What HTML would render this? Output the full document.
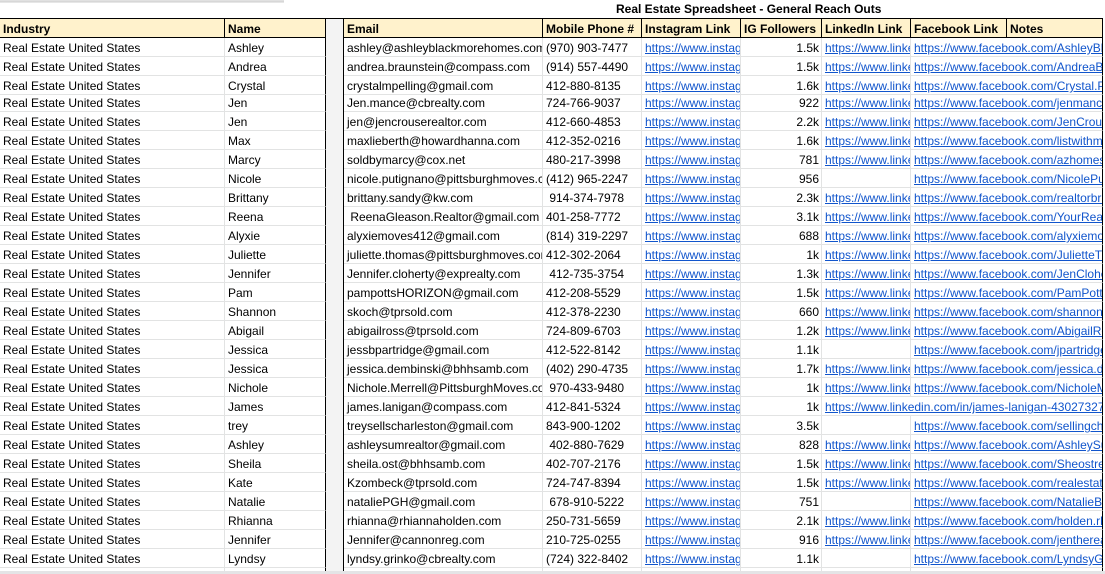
<!DOCTYPE html>
<html><head><meta charset="utf-8">
<style>
html,body{margin:0;padding:0;width:1105px;height:574px;overflow:hidden;background:#fff}
body{position:relative;font-family:"Liberation Sans",Arial,sans-serif;font-size:12px;color:#000}
#shadow{position:absolute;left:0;top:0;width:284px;height:3px;background:linear-gradient(#e6e6e6,#d4d4d4 60%,#f2f2f2)}
#title{position:absolute;left:616px;top:2px;height:15px;line-height:15px;font-weight:bold;white-space:nowrap}
#bar{position:absolute;left:0;top:571px;width:1105px;height:3px;background:#e4e4e6}
table{position:absolute;left:0;top:18px;border-collapse:separate;border-spacing:0;table-layout:fixed;width:1103px}
td,th{box-sizing:border-box;height:19px;padding:2px 0 0 3px;border-right:1px solid #e2e3e3;border-bottom:1px solid #e2e3e3;overflow:hidden;white-space:pre;text-align:left;line-height:16px;font-weight:normal;vertical-align:top}
th{height:20px;background:#fff2cc;font-weight:bold;border-top:1px solid #000;border-bottom:1px solid #000;border-right:1px solid #000}
th.g{background:#f3f3f3;border-bottom:0}
td.g{background:#f3f3f3;padding:0;border-bottom:0;border-right:1px solid #000}
td.n,th.n{border-right:1px solid #000}
td.r{text-align:right;padding:2px 2px 0 0}
td.e{border-right:1px solid #000}
tr.s td{height:17px;line-height:16px;padding-top:0}
tr.s td.r{padding-top:0}
tr.t td{height:3px;padding:0;line-height:0;border-bottom:0}
a{color:#1155cc;text-decoration:underline}
</style></head><body>
<div id="shadow"></div>
<div id="title">Real Estate Spreadsheet - General Reach Outs</div>
<table>
<colgroup><col style="width:225px"><col style="width:101px"><col style="width:18px"><col style="width:199px"><col style="width:99px"><col style="width:99px"><col style="width:81px"><col style="width:89px"><col style="width:96px"><col style="width:96px"></colgroup>
<tr><th>Industry</th><th>Name</th><th class="g"></th><th>Email</th><th>Mobile Phone #</th><th>Instagram Link</th><th>IG Followers</th><th>LinkedIn Link</th><th>Facebook Link</th><th>Notes</th></tr>
<tr><td>Real Estate United States</td><td class="n">Ashley</td><td class="g"></td><td>ashley@ashleyblackmorehomes.com</td><td>(970) 903-7477</td><td><a>https://www.instagram.com</a></td><td class="r">1.5k</td><td><a>https://www.linkedin.com</a></td><td colspan="2" class="e"><a>https://www.facebook.com/AshleyBlackmore</a></td></tr>
<tr><td>Real Estate United States</td><td class="n">Andrea</td><td class="g"></td><td>andrea.braunstein@compass.com</td><td>(914) 557-4490</td><td><a>https://www.instagram.com</a></td><td class="r">1.5k</td><td><a>https://www.linkedin.com</a></td><td colspan="2" class="e"><a>https://www.facebook.com/AndreaBraunstein</a></td></tr>
<tr><td>Real Estate United States</td><td class="n">Crystal</td><td class="g"></td><td>crystalmpelling@gmail.com</td><td>412-880-8135</td><td><a>https://www.instagram.com</a></td><td class="r">1.6k</td><td><a>https://www.linkedin.com</a></td><td colspan="2" class="e"><a>https://www.facebook.com/Crystal.Pelling</a></td></tr>
<tr class="s"><td>Real Estate United States</td><td class="n">Jen</td><td class="g"></td><td>Jen.mance@cbrealty.com</td><td>724-766-9037</td><td><a>https://www.instagram.com</a></td><td class="r">922</td><td><a>https://www.linkedin.com</a></td><td colspan="2" class="e"><a>https://www.facebook.com/jenmance</a></td></tr>
<tr><td>Real Estate United States</td><td class="n">Jen</td><td class="g"></td><td>jen@jencrouserealtor.com</td><td>412-660-4853</td><td><a>https://www.instagram.com</a></td><td class="r">2.2k</td><td><a>https://www.linkedin.com</a></td><td colspan="2" class="e"><a>https://www.facebook.com/JenCrouse</a></td></tr>
<tr><td>Real Estate United States</td><td class="n">Max</td><td class="g"></td><td>maxlieberth@howardhanna.com</td><td>412-352-0216</td><td><a>https://www.instagram.com</a></td><td class="r">1.6k</td><td><a>https://www.linkedin.com</a></td><td colspan="2" class="e"><a>https://www.facebook.com/listwithmax</a></td></tr>
<tr><td>Real Estate United States</td><td class="n">Marcy</td><td class="g"></td><td>soldbymarcy@cox.net</td><td>480-217-3998</td><td><a>https://www.instagram.com</a></td><td class="r">781</td><td><a>https://www.linkedin.com</a></td><td colspan="2" class="e"><a>https://www.facebook.com/azhomesbymarcy</a></td></tr>
<tr><td>Real Estate United States</td><td class="n">Nicole</td><td class="g"></td><td>nicole.putignano@pittsburghmoves.com</td><td>(412) 965-2247</td><td><a>https://www.instagram.com</a></td><td class="r">956</td><td></td><td colspan="2" class="e"><a>https://www.facebook.com/NicolePutignano</a></td></tr>
<tr><td>Real Estate United States</td><td class="n">Brittany</td><td class="g"></td><td>brittany.sandy@kw.com</td><td> 914-374-7978</td><td><a>https://www.instagram.com</a></td><td class="r">2.3k</td><td><a>https://www.linkedin.com</a></td><td colspan="2" class="e"><a>https://www.facebook.com/realtorbrittany</a></td></tr>
<tr><td>Real Estate United States</td><td class="n">Reena</td><td class="g"></td><td> ReenaGleason.Realtor@gmail.com</td><td>401-258-7772</td><td><a>https://www.instagram.com</a></td><td class="r">3.1k</td><td><a>https://www.linkedin.com</a></td><td colspan="2" class="e"><a>https://www.facebook.com/YourRealtorReena</a></td></tr>
<tr><td>Real Estate United States</td><td class="n">Alyxie</td><td class="g"></td><td>alyxiemoves412@gmail.com</td><td>(814) 319-2297</td><td><a>https://www.instagram.com</a></td><td class="r">688</td><td><a>https://www.linkedin.com</a></td><td colspan="2" class="e"><a>https://www.facebook.com/alyxiemoves</a></td></tr>
<tr><td>Real Estate United States</td><td class="n">Juliette</td><td class="g"></td><td>juliette.thomas@pittsburghmoves.com</td><td>412-302-2064</td><td><a>https://www.instagram.com</a></td><td class="r">1k</td><td><a>https://www.linkedin.com</a></td><td colspan="2" class="e"><a>https://www.facebook.com/JulietteThomas</a></td></tr>
<tr><td>Real Estate United States</td><td class="n">Jennifer</td><td class="g"></td><td>Jennifer.cloherty@exprealty.com</td><td> 412-735-3754</td><td><a>https://www.instagram.com</a></td><td class="r">1.3k</td><td><a>https://www.linkedin.com</a></td><td colspan="2" class="e"><a>https://www.facebook.com/JenCloherty</a></td></tr>
<tr><td>Real Estate United States</td><td class="n">Pam</td><td class="g"></td><td>pampottsHORIZON@gmail.com</td><td>412-208-5529</td><td><a>https://www.instagram.com</a></td><td class="r">1.5k</td><td><a>https://www.linkedin.com</a></td><td colspan="2" class="e"><a>https://www.facebook.com/PamPotts</a></td></tr>
<tr><td>Real Estate United States</td><td class="n">Shannon</td><td class="g"></td><td>skoch@tprsold.com</td><td>412-378-2230</td><td><a>https://www.instagram.com</a></td><td class="r">660</td><td><a>https://www.linkedin.com</a></td><td colspan="2" class="e"><a>https://www.facebook.com/shannonkoch</a></td></tr>
<tr><td>Real Estate United States</td><td class="n">Abigail</td><td class="g"></td><td>abigailross@tprsold.com</td><td>724-809-6703</td><td><a>https://www.instagram.com</a></td><td class="r">1.2k</td><td><a>https://www.linkedin.com</a></td><td colspan="2" class="e"><a>https://www.facebook.com/AbigailRoss</a></td></tr>
<tr><td>Real Estate United States</td><td class="n">Jessica</td><td class="g"></td><td>jessbpartridge@gmail.com</td><td>412-522-8142</td><td><a>https://www.instagram.com</a></td><td class="r">1.1k</td><td></td><td colspan="2" class="e"><a>https://www.facebook.com/jpartridge</a></td></tr>
<tr><td>Real Estate United States</td><td class="n">Jessica</td><td class="g"></td><td>jessica.dembinski@bhhsamb.com</td><td>(402) 290-4735</td><td><a>https://www.instagram.com</a></td><td class="r">1.7k</td><td><a>https://www.linkedin.com</a></td><td colspan="2" class="e"><a>https://www.facebook.com/jessica.dembinski</a></td></tr>
<tr><td>Real Estate United States</td><td class="n">Nichole</td><td class="g"></td><td>Nichole.Merrell@PittsburghMoves.com</td><td> 970-433-9480</td><td><a>https://www.instagram.com</a></td><td class="r">1k</td><td><a>https://www.linkedin.com</a></td><td colspan="2" class="e"><a>https://www.facebook.com/NicholeMerrell</a></td></tr>
<tr><td>Real Estate United States</td><td class="n">James</td><td class="g"></td><td>james.lanigan@compass.com</td><td>412-841-5324</td><td><a>https://www.instagram.com</a></td><td class="r">1k</td><td colspan="3" class="e"><a>https://www.linkedin.com/in/james-lanigan-43027327</a></td></tr>
<tr><td>Real Estate United States</td><td class="n">trey</td><td class="g"></td><td>treysellscharleston@gmail.com</td><td>843-900-1202</td><td><a>https://www.instagram.com</a></td><td class="r">3.5k</td><td></td><td colspan="2" class="e"><a>https://www.facebook.com/sellingcharleston</a></td></tr>
<tr><td>Real Estate United States</td><td class="n">Ashley</td><td class="g"></td><td>ashleysumrealtor@gmail.com</td><td> 402-880-7629</td><td><a>https://www.instagram.com</a></td><td class="r">828</td><td><a>https://www.linkedin.com</a></td><td colspan="2" class="e"><a>https://www.facebook.com/AshleySum</a></td></tr>
<tr><td>Real Estate United States</td><td class="n">Sheila</td><td class="g"></td><td>sheila.ost@bhhsamb.com</td><td>402-707-2176</td><td><a>https://www.instagram.com</a></td><td class="r">1.5k</td><td><a>https://www.linkedin.com</a></td><td colspan="2" class="e"><a>https://www.facebook.com/Sheostrealty</a></td></tr>
<tr><td>Real Estate United States</td><td class="n">Kate</td><td class="g"></td><td>Kzombeck@tprsold.com</td><td>724-747-8394</td><td><a>https://www.instagram.com</a></td><td class="r">1.5k</td><td><a>https://www.linkedin.com</a></td><td colspan="2" class="e"><a>https://www.facebook.com/realestatekate</a></td></tr>
<tr><td>Real Estate United States</td><td class="n">Natalie</td><td class="g"></td><td>nataliePGH@gmail.com</td><td> 678-910-5222</td><td><a>https://www.instagram.com</a></td><td class="r">751</td><td></td><td colspan="2" class="e"><a>https://www.facebook.com/NatalieBurns</a></td></tr>
<tr><td>Real Estate United States</td><td class="n">Rhianna</td><td class="g"></td><td>rhianna@rhiannaholden.com</td><td>250-731-5659</td><td><a>https://www.instagram.com</a></td><td class="r">2.1k</td><td><a>https://www.linkedin.com</a></td><td colspan="2" class="e"><a>https://www.facebook.com/holden.rhianna</a></td></tr>
<tr><td>Real Estate United States</td><td class="n">Jennifer</td><td class="g"></td><td>Jennifer@cannonreg.com</td><td>210-725-0255</td><td><a>https://www.instagram.com</a></td><td class="r">916</td><td><a>https://www.linkedin.com</a></td><td colspan="2" class="e"><a>https://www.facebook.com/jentherealtor</a></td></tr>
<tr><td>Real Estate United States</td><td class="n">Lyndsy</td><td class="g"></td><td>lyndsy.grinko@cbrealty.com</td><td>(724) 322-8402</td><td><a>https://www.instagram.com</a></td><td class="r">1.1k</td><td></td><td colspan="2" class="e"><a>https://www.facebook.com/LyndsyGrinko</a></td></tr>
<tr class="t"><td></td><td class="n"></td><td class="g"></td><td></td><td></td><td></td><td></td><td></td><td colspan="2" class="e"></td></tr>
</table>
<div id="bar"></div>
</body></html>
